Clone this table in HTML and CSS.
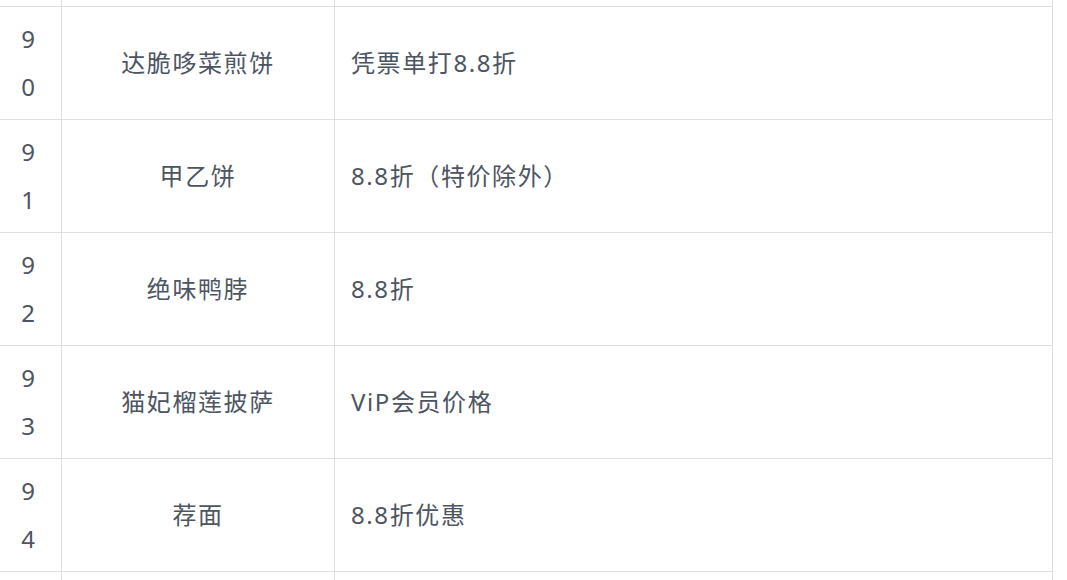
FILE: index.html
```html
<!DOCTYPE html>
<html lang="zh-CN">
<head>
<meta charset="utf-8">
<title>优惠列表</title>
<link rel="stylesheet" href="styles.css">
</head>
<body>
<div class="viewport">
<table class="deals">
<colgroup>
<col class="c-num">
<col class="c-name">
<col class="c-offer">
</colgroup>
<tbody>
<tr class="filler top"><td></td><td></td><td></td></tr>
<tr><td class="num">90</td><td class="name">达脆哆菜煎饼</td><td class="offer">凭票单打8.8折</td></tr>
<tr><td class="num">91</td><td class="name">甲乙饼</td><td class="offer">8.8折（特价除外）</td></tr>
<tr><td class="num">92</td><td class="name">绝味鸭脖</td><td class="offer">8.8折</td></tr>
<tr><td class="num">93</td><td class="name">猫妃榴莲披萨</td><td class="offer">ViP会员价格</td></tr>
<tr><td class="num">94</td><td class="name">荐面</td><td class="offer">8.8折优惠</td></tr>
<tr class="filler bottom"><td></td><td></td><td></td></tr>
</tbody>
</table>
</div>
</body>
</html>
```
FILE: styles.css
```css
html, body {
  margin: 0;
  padding: 0;
  background: #ffffff;
}
.viewport {
  width: 1067px;
  height: 580px;
  overflow: hidden;
}
.deals {
  border-collapse: collapse;
  table-layout: fixed;
  width: 1056px;
  margin-left: -4px;
  margin-top: -30px;
  font-family: "Noto Sans", "Noto Sans CJK SC", sans-serif;
  font-size: 24px;
  letter-spacing: 1.6px;
  color: #4d5462;
}
.c-num { width: 65px; }
.c-name { width: 273px; }
.c-offer { width: 718px; }
.deals td {
  border: 1px solid #dedfe2;
  padding: 8px 16px;
  line-height: 48px;
  vertical-align: middle;
}
.deals td.num {
  padding: 8px 20px;
  text-align: center;
  word-break: break-all;
}
.deals td.name {
  text-align: center;
}
.deals td.offer {
  text-align: left;
}
.filler.top td {
  height: 35px;
  padding: 0;
}
.filler.bottom td {
  height: 40px;
  padding: 0;
}
```
